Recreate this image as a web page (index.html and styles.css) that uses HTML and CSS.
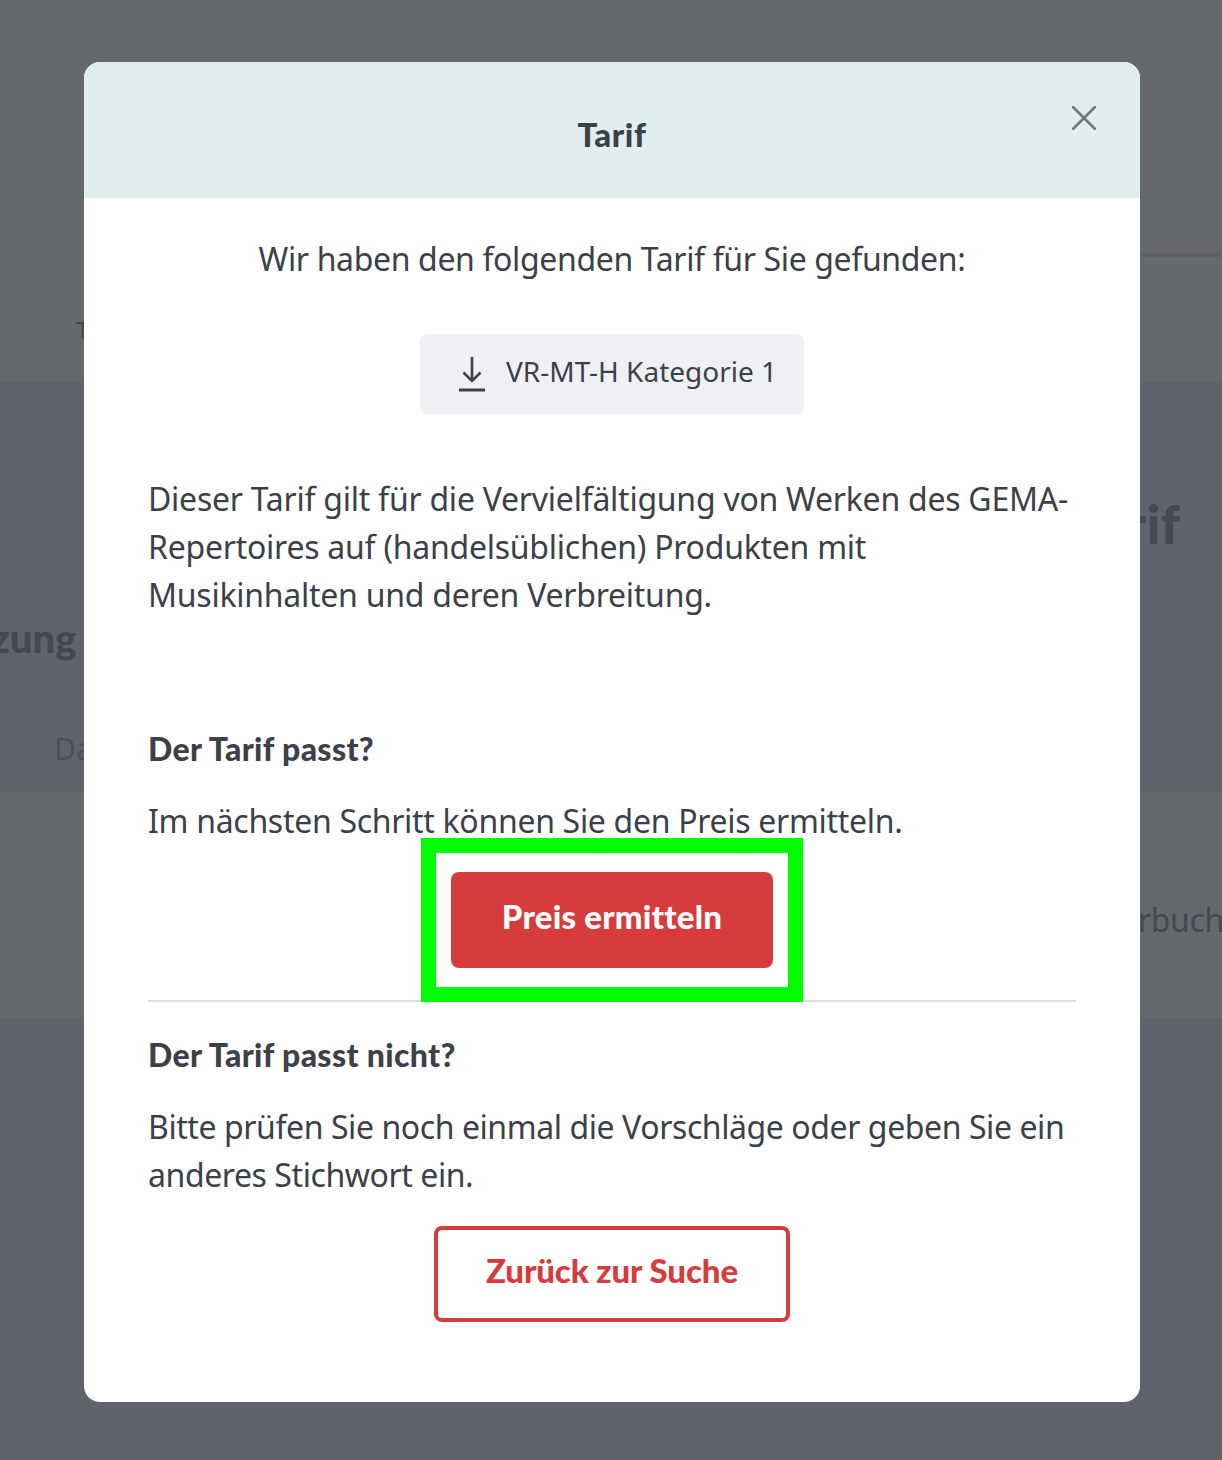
FILE: index.html
```html
<!DOCTYPE html>
<html lang="de">
<head>
    <meta charset="UTF-8">
    <meta name="viewport" content="width=device-width, initial-scale=1.0">
    <title>Tarif</title>
    <link rel="stylesheet" href="styles.css">
</head>
<body>
    <div class="page">
        <div class="page-top">
            <div class="page-rule"></div>
            <div class="page-tab">T</div>
        </div>
        <div class="page-main">
            <div class="page-title">Tarif</div>
            <div class="page-subtitle">Nutzung</div>
            <div class="page-field">Da</div>
        </div>
        <div class="page-lower">
            <div class="page-action">Vorbuchen</div>
        </div>
    </div>

    <div class="modal">
        <div class="modal-header">
            <div class="modal-title">Tarif</div>
            <button class="modal-close" aria-label="Schließen">
                <svg width="24" height="24" viewBox="0 0 24 24" fill="none" stroke="#6f7a80" stroke-width="2.6" stroke-linecap="round">
                    <path d="M1 1L23 23M23 1L1 23"/>
                </svg>
            </button>
        </div>
        <div class="modal-body">
            <p class="intro">Wir haben den folgenden Tarif für Sie gefunden:</p>
            <div class="download-row">
                <a class="download-chip">
                    <svg width="28" height="36" viewBox="0 0 28 36" fill="none" stroke="#3c4049" stroke-width="2.6">
                        <path d="M14 1V25M5.5 16.5L14 25L22.5 16.5"/>
                        <path d="M1 34H27" stroke-width="3"/>
                    </svg>
                    <span>VR-MT-H Kategorie 1</span>
                </a>
            </div>
            <p class="description">Dieser Tarif gilt für die Vervielfältigung von Werken des GEMA-Repertoires auf (handelsüblichen) Produkten mit Musikinhalten und deren Verbreitung.</p>
            <h3 class="question">Der Tarif passt?</h3>
            <p class="hint">Im nächsten Schritt können Sie den Preis ermitteln.</p>
            <div class="primary-row">
                <button class="btn btn-primary">Preis ermitteln<span class="highlight"></span></button>
            </div>
            <div class="divider"></div>
            <h3 class="question question-second">Der Tarif passt nicht?</h3>
            <p class="hint hint-tight">Bitte prüfen Sie noch einmal die Vorschläge oder geben Sie ein anderes Stichwort ein.</p>
            <div class="secondary-row">
                <button class="btn btn-secondary">Zurück zur Suche</button>
            </div>
        </div>
    </div>
</body>
</html>
```

FILE: styles.css
```css
* {
    box-sizing: border-box;
}
html, body {
    margin: 0;
    padding: 0;
}
body {
    width: 1222px;
    height: 1460px;
    overflow: hidden;
    position: relative;
    font-family: "Noto Sans", "Open Sans", sans-serif;
    color: #3c4049;
    background-color: #5f636b;
}

/* dimmed page behind the dialog */
.page {
    color: #444851;
}
.page-top {
    height: 382px;
    background: #65686c;
    padding-top: 253px;
}
.page-rule {
    height: 4px;
    margin-left: 600px;
    background: #5f6166;
}
.page-tab {
    margin: 55px 0 0 76px;
    font-size: 24px;
    line-height: 36px;
}
.page-main {
    height: 410px;
    background: #5f636b;
    overflow: hidden;
}
.page-title {
    padding: 110px 42px 0 0;
    text-align: right;
    font-family: Lato, sans-serif;
    font-size: 54px;
    line-height: 64px;
    font-weight: 900;
}
.page-subtitle {
    margin: 56px 0 0 -77px;
    font-family: Lato, sans-serif;
    font-size: 40px;
    line-height: 52px;
    font-weight: 900;
}
.page-field {
    margin: 63px 0 0 54px;
    font-size: 30px;
    line-height: 44px;
    color: #4a4e56;
}
.page-lower {
    height: 226px;
    background: #65686c;
    text-align: right;
    overflow: hidden;
    padding-top: 108px;
}
.page-action {
    margin-right: -39px;
    font-size: 32px;
    line-height: 40px;
    letter-spacing: -0.36px;
}

/* dialog */
.modal {
    position: absolute;
    left: 84px;
    top: 62px;
    width: 1056px;
    height: 1340px;
    background: white;
    border-radius: 16px;
    overflow: hidden;
}
.modal-header {
    height: 136px;
    background: #e0eeee;
    display: flex;
    align-items: center;
    justify-content: center;
    position: relative;
}
.modal-title {
    font-family: Lato, sans-serif;
    font-size: 33px;
    font-weight: 900;
    line-height: 48px;
    letter-spacing: 0.6px;
    margin-top: 8px;
}
.modal-close {
    position: absolute;
    top: 44px;
    right: 44px;
    width: 24px;
    height: 24px;
    padding: 0;
    border: none;
    background: none;
}
.modal-close svg {
    display: block;
}
.modal-body {
    padding: 37px 64px 0;
    font-size: 32px;
    line-height: 48px;
    letter-spacing: -0.36px;
}
.modal-body p, .modal-body h3 {
    margin: 0;
    font-size: 32px;
    line-height: 48px;
}
.intro {
    text-align: center;
}
.download-row {
    display: flex;
    justify-content: center;
    margin-top: 51px;
}
.download-chip {
    width: 384px;
    height: 80px;
    display: flex;
    align-items: center;
    gap: 20px;
    padding-left: 38px;
    border-radius: 8px;
    background: #eff0f4;
    font-size: 28px;
    letter-spacing: 0;
}
.download-chip span {
    padding-bottom: 6px;
}
.modal-body .description {
    margin-top: 61px;
    letter-spacing: -0.25px;
}
.modal-body .question {
    margin-top: 106px;
    font-family: Lato, sans-serif;
    font-weight: 900;
    letter-spacing: 0.35px;
}
.modal-body .question-second {
    margin-top: 29px;
}
.modal-body .hint {
    margin-top: 24px;
    letter-spacing: -0.3px;
}
.modal-body .hint-tight {
    letter-spacing: -0.42px;
}
.primary-row {
    display: flex;
    justify-content: center;
    margin-top: 27px;
}
.btn {
    font-family: Lato, sans-serif;
    font-size: 33px;
    font-weight: 900;
    border-radius: 8px;
    height: 96px;
    padding-bottom: 10px;
}
.btn-primary {
    position: relative;
    width: 322px;
    border: none;
    background: #d63c3c;
    color: white;
    letter-spacing: 0.2px;
}
.highlight {
    position: absolute;
    top: -34px;
    bottom: -34px;
    left: -30px;
    right: -30px;
    border: 15px solid #00ff00;
}
.divider {
    height: 2px;
    margin-top: 32px;
    background: #dddddf;
}
.secondary-row {
    display: flex;
    justify-content: center;
    margin-top: 27px;
}
.btn-secondary {
    width: 356px;
    border: 4px solid #d63c3c;
    background: white;
    color: #d63c3c;
    letter-spacing: -0.1px;
}
```
